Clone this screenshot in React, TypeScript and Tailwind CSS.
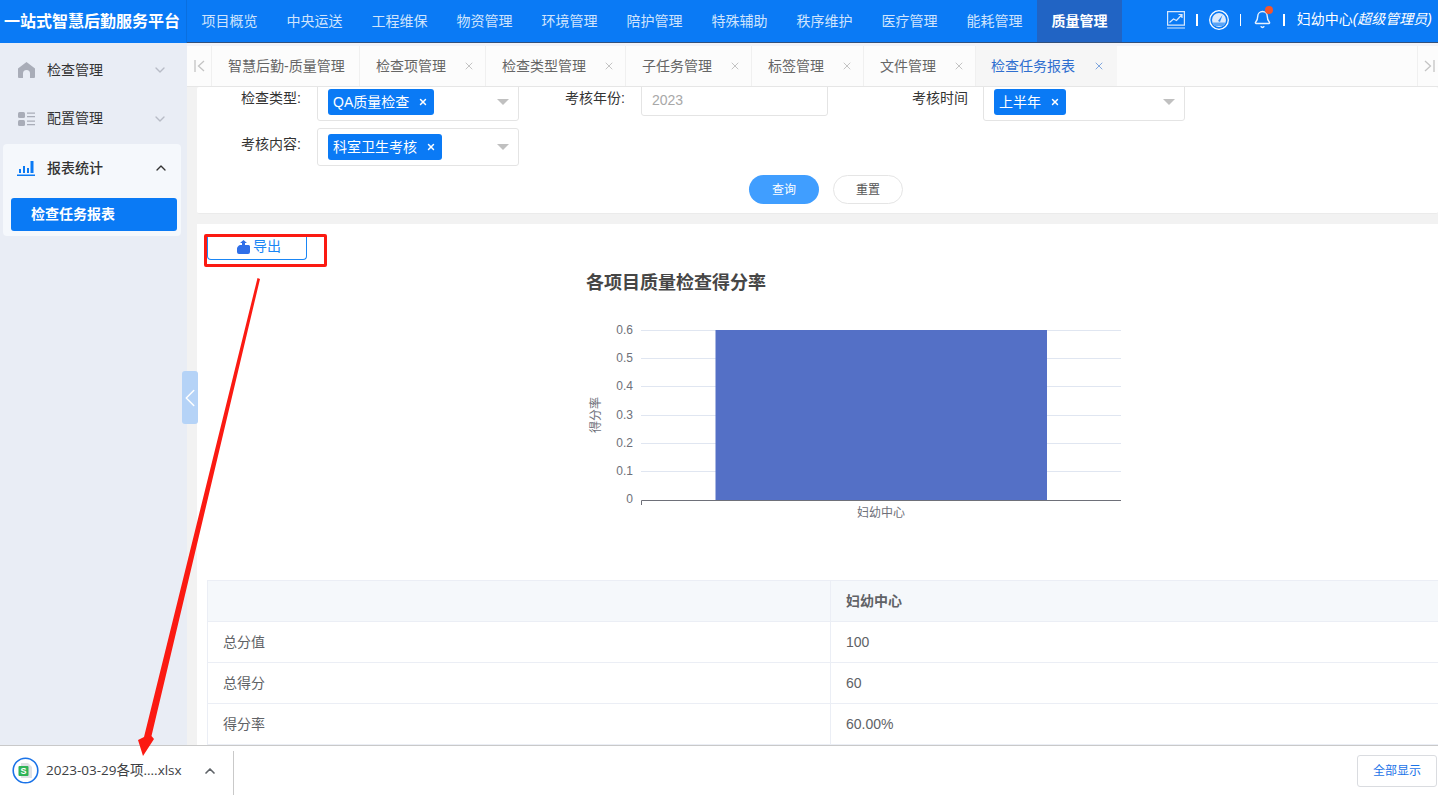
import { ChevronDown, ChevronUp, ChevronLeft, X, Bell } from "lucide-react";

const navItems = ["项目概览", "中央运送", "工程维保", "物资管理", "环境管理", "陪护管理", "特殊辅助", "秩序维护", "医疗管理", "能耗管理"];

const tabs = [
  { name: "智慧后勤-质量管理", w: "w-[148px]", closable: false },
  { name: "检查项管理", w: "w-[126px]", closable: true },
  { name: "检查类型管理", w: "w-[140px]", closable: true },
  { name: "子任务管理", w: "w-[126px]", closable: true },
  { name: "标签管理", w: "w-[112px]", closable: true },
  { name: "文件管理", w: "w-[112px]", closable: true },
];

function Tag({ label }: { label: string }) {
  return (
    <span className="inline-flex items-center h-[26px] pl-[5px] pr-[6px] gap-[9px] rounded-[3px] bg-[#0a7af5] text-white text-[14px]">
      {label}
      <X size={10} strokeWidth={3.5} />
    </span>
  );
}

function Select({ label }: { label: string }) {
  return (
    <div className="w-[202px] h-[38px] flex items-center justify-between pl-[10px] pr-[9px] border border-[#e4e4e4] rounded-[3px] bg-white">
      <Tag label={label} />
      <span className="w-0 h-0 border-x-[6px] border-x-transparent border-t-[6px] border-t-[#c0c0c0]" />
    </div>
  );
}

function Row({ name, value, header }: { name: string; value: string; header?: boolean }) {
  return (
    <div className={`flex h-[41px] border-b border-[#ebeef5] ${header ? "bg-[#f5f8fb] font-bold" : "bg-white"}`}>
      <div className="w-[623px] shrink-0 pl-[15px] flex items-center border-r border-[#ebeef5]">{name}</div>
      <div className="flex-1 pl-[15px] flex items-center">{value}</div>
    </div>
  );
}

export default function App() {
  return (
    <div className="relative w-[1438px] h-[795px] overflow-hidden flex flex-col bg-[#f2f2f2] text-[14px] text-[#606266] font-['Liberation_Sans','Noto_Sans_CJK_SC',sans-serif]">
      {/* top bar */}
      <header className="h-[43px] shrink-0 flex bg-[#0a7af5]">
        <div className="w-[187px] shrink-0 pr-[2px] flex items-center justify-center border-r border-[#0a6fdf] text-white text-[16px] font-bold whitespace-nowrap">
          一站式智慧后勤服务平台
        </div>
        <div className="flex-1 flex border-b border-[#33507a]">
          <nav className="flex">
            {navItems.map((item) => (
              <div key={item} className="w-[85px] flex items-center justify-center text-[#cfe4fd]">
                {item}
              </div>
            ))}
            <div className="w-[85px] flex items-center justify-center bg-[#2164c4] text-white font-bold">质量管理</div>
          </nav>
          <div className="flex-1 flex items-center justify-end pr-[6px] pb-[3px] text-white">
            <svg width="18" height="18" viewBox="0 0 18 18" fill="none" stroke="#d7e8fd" strokeWidth="1.2">
              <path d="M.6.6h16.8v13.6H.6zM0 17h18" />
              <path d="M2.500 11.500l4-3.500 3 1.500 5-5.500M11.500 3.500h3.500v3.500" />
            </svg>
            <span className="ml-[11px] w-[1.5px] h-[12px] bg-white" />
            <svg className="ml-[11px]" width="20" height="20" viewBox="0 0 20 20">
              <circle cx="10" cy="10" r="9.300" fill="#0a7af5" stroke="#ffffff" strokeWidth="1.300" />
              <circle cx="10" cy="10" r="7" fill="#dceafc" />
              <path d="M3.500 12.500h13l-2 3.500h-9z" fill="#5aa4f6" />
              <path d="M9 11l4.500-6-2.500 7z" fill="#2a8bf5" />
            </svg>
            <span className="ml-[11px] w-[1.5px] h-[12px] bg-white" />
            <span className="relative ml-[12px]">
              <Bell size={19} strokeWidth={1.8} color="#e8f2fe" />
              <span className="absolute -top-[4px] -right-[1px] w-[8px] h-[8px] rounded-full bg-[#f4552c]" />
            </span>
            <span className="ml-[11px] w-[1.5px] h-[12px] bg-white" />
            <span className="ml-[12px] whitespace-nowrap">
              妇幼中心<i>(超级管理员)</i>
            </span>
          </div>
        </div>
      </header>

      <div className="flex-1 min-h-0 flex">
        {/* sidebar */}
        <aside className="relative w-[187px] shrink-0 bg-[#e9edf5] text-[#333]">
          <div className="h-[54px] flex items-center pl-[18px] pr-[19px]">
            <svg width="17" height="16" viewBox="0 0 17 16" fill="#a9adb8">
              <path d="M8.500 0L17 6.500V15a1 1 0 0 1-1 1h-4v-4.500a3.500 3.500 0 0 0-7 0V16H1a1 1 0 0 1-1-1V6.500z" />
            </svg>
            <span className="ml-[12px] flex-1">检查管理</span>
            <ChevronDown size={16} color="#b8bcc6" />
          </div>
          <div className="h-[43px] flex items-center pl-[18px] pr-[19px]">
            <svg width="17" height="14" viewBox="0 0 17 14" fill="#a9adb8">
              <rect x="0" y="0" width="7" height="6" rx="1.500" />
              <rect x="0" y="8" width="7" height="6" rx="1.500" />
              <path d="M9 .5h8v1.300H9zM9 4h8v1.300H9zM9 8.500h8v1.300H9zM9 12h8v1.300H9z" />
            </svg>
            <span className="ml-[12px] flex-1">配置管理</span>
            <ChevronDown size={16} color="#b8bcc6" />
          </div>
          <div className="ml-[3px] mt-[4px] w-[178px] h-[92px] rounded-[4px] bg-[#f5f8fc]">
            <div className="h-[48px] flex items-center pl-[14px] pr-[12px] font-medium">
              <svg width="18" height="15" viewBox="0 0 18 15" fill="#0a7af5">
                <path d="M0 13.600h18V15H0zM2 8h2v4H2zM6 5h2v7H6zM10 7h2v5h-2zM13.500 0h3v12h-3z" />
              </svg>
              <span className="ml-[12px] flex-1">报表统计</span>
              <ChevronUp size={16} color="#333" />
            </div>
            <div className="ml-[8px] mt-[6px] w-[166px] h-[33px] rounded-[3px] bg-[#0a7af5] text-white font-bold flex items-center pl-[20px]">
              检查任务报表
            </div>
          </div>
        </aside>

        <div className="relative flex-1 min-w-0 flex flex-col">
          {/* tab strip */}
          <div className="relative z-10 h-[44px] shrink-0 pt-[3px] flex flex-col bg-[#f2f3f8]">
            <div className="flex-1 flex bg-[#fcfcfc] border-b border-[#e6e6e6] text-[#666]">
              <div className="w-[25px] shrink-0 flex items-center justify-center border-r border-[#f0f0f0]">
                <svg width="11" height="12" viewBox="0 0 11 12" fill="none" stroke="#c4c4c4" strokeWidth="1.300">
                  <path d="M1 0v12M10 1L4.500 6l5.500 5" />
                </svg>
              </div>
              {tabs.map((t) => (
                <div key={t.name} className={`${t.w} shrink-0 flex items-center justify-between pl-[16px] pr-[10px] border-r border-[#f0f0f0] whitespace-nowrap`}>
                  <span>{t.name}</span>
                  {t.closable && <X size={12} color="#c4c4c4" />}
                </div>
              ))}
              <div className="w-[141px] shrink-0 flex items-center justify-between pl-[15px] pr-[12px] bg-[#f6f6f6] text-[#2f6fd0]">
                <span>检查任务报表</span>
                <X size={12} color="#7fa6de" />
              </div>
              <div className="flex-1" />
              <div className="w-[21px] shrink-0 flex items-center pl-[6px] border-l border-[#f0f0f0] overflow-hidden">
                <svg className="shrink-0" width="15" height="12" viewBox="0 0 15 12" fill="none" stroke="#c4c4c4" strokeWidth="1.300">
                  <path d="M1 1l5.500 5L1 11M10 0v12" />
                </svg>
              </div>
            </div>
          </div>

          <main className="flex-1 min-h-0 pl-[10px] flex flex-col gap-[10px] overflow-hidden">
            {/* search form */}
            <section className="relative h-[127px] shrink-0 bg-white rounded-[2px] border-b border-[#ebebeb] overflow-hidden text-[#333]">
              <div className="flex -mt-[4px]">
                <div className="w-[104px] pt-[5px] text-right">检查类型:</div>
                <div className="ml-[16px]"><Select label="QA质量检查" /></div>
                <div className="w-[106px] pt-[5px] text-right">考核年份:</div>
                <div className="ml-[16px] w-[187px] h-[33px] flex items-center pl-[10px] pt-[1px] border border-[#e4e4e4] rounded-[3px] text-[#a8a8a8]">2023</div>
                <div className="w-[140px] pt-[5px] text-right">考核时间</div>
                <div className="ml-[15px]"><Select label="上半年" /></div>
              </div>
              <div className="flex mt-[7px]">
                <div className="w-[104px] pt-[6px] text-right">考核内容:</div>
                <div className="ml-[16px]"><Select label="科室卫生考核" /></div>
              </div>
              <div className="flex mt-[9px] ml-[552px] gap-[14px] text-[12px]">
                <button className="w-[70px] h-[29px] rounded-full bg-[#409eff] text-white">查询</button>
                <button className="w-[70px] h-[29px] rounded-full border border-[#e5e5e5] text-[#555] bg-white">重置</button>
              </div>
            </section>

            {/* report */}
            <section className="flex-1 min-h-0 bg-white pl-[10px] pt-[10px]">
              <button className="w-[100px] h-[26px] pl-[4px] flex items-center justify-center gap-[3px] border border-[#1a86f5] border-t-0 rounded-b-[4px] text-[#1a86f5]">
                <svg width="13" height="14" viewBox="0 0 13 14" fill="#2f6fe8">
                  <path d="M6.500 0L10 3H8v2h3.500A1.500 1.500 0 0 1 13 6.500V12a2 2 0 0 1-2 2H2a2 2 0 0 1-2-2V8.500C0 7 1.500 5.500 3 5h2V3H3z" />
                </svg>
                导出
              </button>

              <svg className="-ml-[10px]" width="1241" height="320" viewBox="197 260 1241 320">
                <text x="586" y="289" fontSize="18" fontWeight="700" fill="#464646">各项目质量检查得分率</text>
                {[330, 358, 386, 415, 443, 471].map((y) => (
                  <line key={y} x1="641" x2="1121" y1={y + 0.5} y2={y + 0.5} stroke="#e0e6f1" />
                ))}
                <rect x="715.5" y="330" width="331.5" height="170" fill="#5470c6" />
                <path d="M641.5 505V500.5H1121" fill="none" stroke="#6e7079" />
                {["0.6", "0.5", "0.4", "0.3", "0.2", "0.1", "0"].map((v, i) => (
                  <text key={v} x="633" y={334 + [0, 28, 56, 85, 113, 141, 169][i]} fontSize="12" textAnchor="end" fill="#6e7079">{v}</text>
                ))}
                <text transform="translate(600 415) rotate(-90)" fontSize="12" textAnchor="middle" fill="#6e7079">得分率</text>
                <text x="881" y="517" fontSize="12" textAnchor="middle" fill="#6e7079">妇幼中心</text>
              </svg>

              <div className="border border-[#ebeef5] border-r-0">
                <Row header name="" value="妇幼中心" />
                <Row name="总分值" value="100" />
                <Row name="总得分" value="60" />
                <Row name="得分率" value="60.00%" />
              </div>
            </section>
          </main>

          {/* collapse handle */}
          <div className="absolute left-[-5px] top-[328px] w-[16px] h-[53px] rounded-[3px] bg-[#b5d3f7] flex items-center justify-center z-20">
            <ChevronLeft className="shrink-0" size={30} color="#ffffff" strokeWidth={1.2} />
          </div>
        </div>
      </div>

      {/* download bar */}
      <footer className="h-[50px] shrink-0 flex items-center bg-white border-t border-[#c9c9c9] text-[#3c4043]">
        <svg className="ml-[12px]" width="27" height="27" viewBox="0 0 27 27">
          <circle cx="13.5" cy="13.5" r="12.3" fill="none" stroke="#1a73e8" strokeWidth="1.6" />
          <path d="M9 6h7l4 4v11H9z" fill="#dfe1e5" />
          <rect x="6.500" y="9" width="10" height="10" rx="1" fill="#2fb457" />
          <text x="11.500" y="17" fontSize="9" fontWeight="700" textAnchor="middle" fill="#ffffff">S</text>
        </svg>
        <span className="ml-[7px] w-[144px] text-[13.5px] whitespace-nowrap font-['Open_Sans','Noto_Sans_CJK_SC',sans-serif]">2023-03-29各项....xlsx</span>
        <ChevronUp className="ml-[12px]" size={16} color="#5f6368" strokeWidth={2.5} />
        <span className="ml-[15px] w-[1px] h-[44px] self-end bg-[#c9c9c9]" />
        <button className="ml-auto mr-[1px] w-[80px] h-[32px] border border-[#dadce0] rounded-[3px] text-[12px] text-[#1a73e8]">全部显示</button>
      </footer>

      {/* annotation */}
      <div className="absolute left-[204px] top-[234px] w-[123px] h-[33px] border-[3px] border-[#fb1a12] rounded-[2px]" />
      <svg className="absolute inset-0 pointer-events-none" width="1438" height="795" viewBox="0 0 1438 795">
        <path d="M257.500 278L260 279L151.500 736L154 739L143 756L138 740L144 737z" fill="#fb1a12" />
      </svg>
    </div>
  );
}
